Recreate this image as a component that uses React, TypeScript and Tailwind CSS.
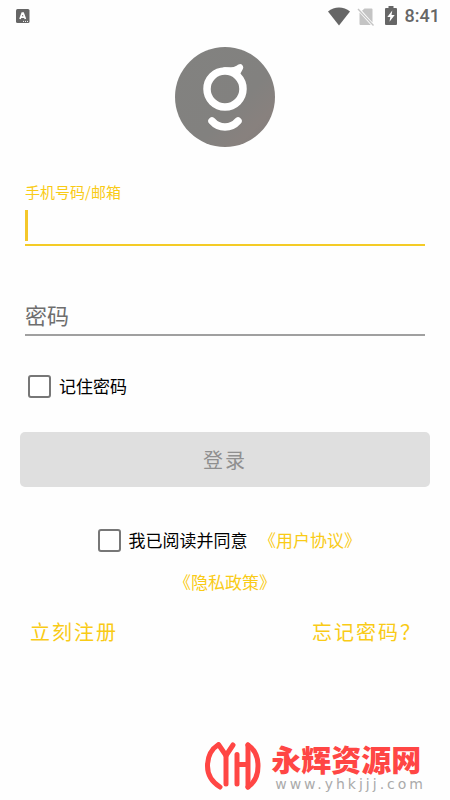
import { useState } from "react";

function StatusBar() {
  return (
    <header className="flex h-8 items-center justify-between pr-2.5 pl-4 text-[#666]">
      <svg className="size-3.5" viewBox="0 0 14 14" aria-hidden="true">
        <rect width="13.5" height="14" rx="1.5" fill="currentColor" />
        <path d="M4 10 6.2 4.2h1L9.4 10M5 8.2h3.4" fill="none" stroke="#fff" strokeWidth="1.7" />
        <path d="M7 12.4h1M9 12.4h1M11 12.4h1" stroke="#fff" strokeWidth="1" />
      </svg>
      <div className="flex items-center">
        <svg className="h-5 w-6" viewBox="0 0 24 20" aria-hidden="true">
          <path d="M12 19.500 1 5.400C4.200 2.800 8 1.400 12 1.400s7.800 1.400 11 4Z" fill="currentColor" />
        </svg>
        <svg className="ml-1.5 h-5 w-5" viewBox="0 0 20 20" aria-hidden="true">
          <path d="M2.500 6.500 13.800 19H3.500a1 1 0 0 1-1-1ZM5 4.800 7.500 2.500h7a1 1 0 0 1 1 1v13Z" fill="#c4c4c4" />
          <path d="m1 3 15.500 16.500" stroke="#c4c4c4" strokeWidth="1.300" />
        </svg>
        <svg className="ml-2 h-5 w-3" viewBox="0 0 12 20" aria-hidden="true">
          <path d="M3.500 0h5v2H11a1 1 0 0 1 1 1v15a1 1 0 0 1-1 1H1a1 1 0 0 1-1-1V3a1 1 0 0 1 1-1h2.500Z" fill="currentColor" />
          <path d="M7.300 4.500 2.300 11h3l-.8 4.700 5.200-6.700H6.500Z" fill="#fff" />
        </svg>
        <span className="ml-2 font-[Roboto,sans-serif] text-lg font-medium">8:41</span>
      </div>
    </header>
  );
}

function Logo() {
  return (
    <svg className="size-[100px]" viewBox="0 0 100 100" role="img" aria-label="g">
      <defs>
        <linearGradient id="disc" x1="0" y1="0" x2="1" y2="1">
          <stop offset="0" stopColor="#828280" />
          <stop offset="0.6" stopColor="#82817f" />
          <stop offset="0.8" stopColor="#88817e" />
          <stop offset="1" stopColor="#807d7b" />
        </linearGradient>
      </defs>
      <circle cx="50" cy="50" r="50" fill="url(#disc)" />
      <g fill="none" stroke="#fff" strokeLinecap="round" strokeLinejoin="round">
        <circle cx="50" cy="42" r="18" strokeWidth="7.500" />
        <path d="M50 23.500h6c4 0 6-1.500 9-3l-3.500 6.500" strokeWidth="6.500" />
        <path d="M37 74c7 8 19 8 26 0" strokeWidth="7.500" />
      </g>
    </svg>
  );
}

function CheckBox({ id }: { id: string }) {
  return (
    <input
      id={id}
      type="checkbox"
      className="size-[23px] shrink-0 appearance-none rounded-[3px] border-2 border-[#777] bg-white checked:bg-[#f9cb16]"
    />
  );
}

function Watermark() {
  return (
    <footer className="mt-auto flex items-end justify-end pr-6 pb-2">
      <svg className="h-[50px] w-[56px]" viewBox="0 0 56 50" fill="none" stroke="#ff4644" strokeWidth="5" strokeLinecap="round" strokeLinejoin="round" aria-hidden="true">
        <path d="M15 45C7 40 2.500 33 2.500 24S6.500 7 13.500 2.500L21 13.500 28 3" />
        <path d="M21 14v28" />
        <path d="M32 12.500V42M32 22.500h11M43 3v42" />
        <path d="M43 3c6 4 10 11 10 21s-4 17-10 21" />
      </svg>
      <div className="ml-2.5 flex flex-col gap-1">
        <p className="font-['Noto_Sans_CJK_SC',sans-serif] text-[30px] leading-7 font-black text-[#ff4644]">永辉资源网</p>
        <p className="pl-1 font-['DejaVu_Sans',sans-serif] text-sm leading-4 tracking-[3px] text-[#aaa]">www.yhkjjj.com</p>
      </div>
    </footer>
  );
}

export default function App() {
  const [account, setAccount] = useState("");
  const [password, setPassword] = useState("");

  return (
    <div className="flex min-h-screen flex-col bg-[#fefefe] font-['Noto_Sans_CJK_SC',sans-serif]">
      <StatusBar />
      <main className="flex flex-col px-5">
        <div className="mt-[15px] flex justify-center">
          <Logo />
        </div>

        <form className="mt-[33px] flex flex-col" onSubmit={(e) => e.preventDefault()}>
          <div className="mx-[5px] border-b-2 border-[#f4cb26]">
            <label htmlFor="account" className="block text-[15px] leading-6 text-[#f9cb16]">手机号码/邮箱</label>
            <div className="mt-1.5 flex h-[34px] items-start">
              <span className="h-[31px] w-[3px] bg-[#f4c72a]" />
              <input
                id="account"
                value={account}
                onChange={(e) => setAccount(e.target.value)}
                className="h-[31px] min-w-0 flex-1 bg-transparent text-[22px] caret-transparent outline-none"
              />
            </div>
          </div>

          <div className="mx-[5px] mt-12 border-b-2 border-[#a0a0a0]">
            <input
              type="password"
              aria-label="密码"
              placeholder="密码"
              value={password}
              onChange={(e) => setPassword(e.target.value)}
              className="block h-10 w-full bg-transparent text-[22px] outline-none placeholder:text-[#6e6e6e]"
            />
          </div>

          <div className="mt-9 ml-2 flex items-center gap-2">
            <CheckBox id="remember" />
            <label htmlFor="remember" className="text-[17px] leading-7 text-black">记住密码</label>
          </div>

          <button type="submit" disabled className="mt-8 h-[55px] rounded-[5px] bg-[#dfdfdf] text-xl tracking-widest text-[#8f8f8f]">
            登录
          </button>

          <div className="mt-9 flex flex-wrap items-center justify-center">
            <CheckBox id="agree" />
            <label htmlFor="agree" className="ml-2 text-[17px] leading-[34px] text-black">我已阅读并同意</label>
            <a href="#terms" className="ml-5 text-[17px] leading-[34px] text-[#f9cb16] [font-feature-settings:'halt']">《用户协议》</a>
          </div>
          <a href="#privacy" className="mt-2 self-center text-[17px] leading-[34px] text-[#f9cb16] [font-feature-settings:'halt']">《隐私政策》</a>
        </form>

        <nav className="mt-[17px] flex justify-between pr-2 pl-2.5 text-xl leading-8 tracking-widest text-[#f9cb16]">
          <a href="#register">立刻注册</a>
          <a href="#forgot">忘记密码？</a>
        </nav>
      </main>
      <Watermark />
    </div>
  );
}
